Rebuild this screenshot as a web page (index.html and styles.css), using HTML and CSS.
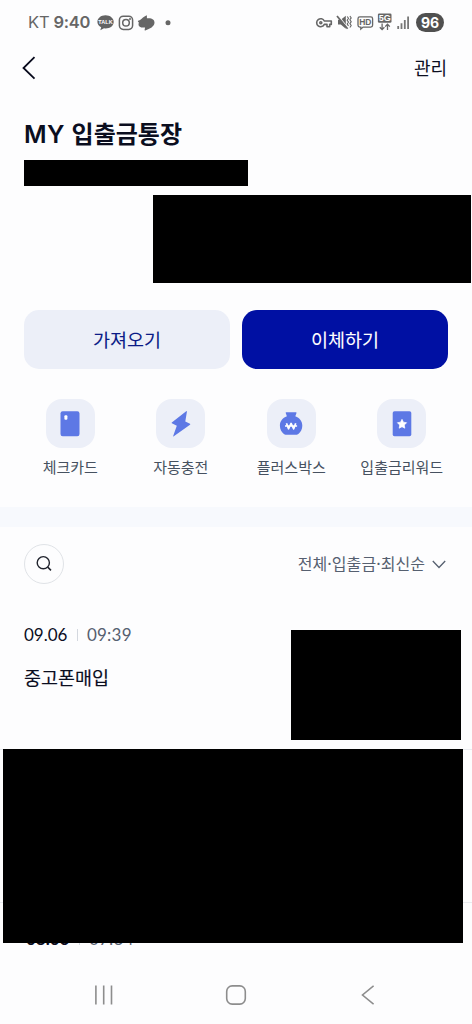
FILE: index.html
```html
<!DOCTYPE html>
<html lang="ko">
<head>
<meta charset="utf-8">
<meta name="viewport" content="width=device-width, initial-scale=1">
<title>MY 입출금통장</title>
<link rel="stylesheet" href="styles.css">
</head>
<body>
<div class="phone">
  <header class="status">
    <span class="carrier">KT</span>
    <span class="clock">9:40</span>
    <svg class="status-left" width="78" height="18" viewBox="0 0 78 18">
      <path d="M8.500 1.300c4.600 0 8.200 2.900 8.200 6.600s-3.600 6.500-8.200 6.500l-1.500-.1-3.700 2 .9-3C1.800 12.100.4 10.100.4 7.900c0-3.700 3.500-6.600 8.100-6.600z" fill="#636363"/>
      <text class="talk" x="8.500" y="9.900" text-anchor="middle">TALK</text>
      <g fill="none" stroke="#666" stroke-width="1.500"><rect x="22.400" y="2.200" width="13.200" height="13.200" rx="3.800"/><circle cx="29" cy="8.800" r="3.300"/></g>
      <circle cx="33" cy="5" r="1" fill="#666"/>
      <path d="M49.300 1.400q.6-.5.600.3v2.600c4.800-.6 7.600 1.200 7.600 4.300 0 4-4.600 6.400-9.200 7.800q-.9.200-.7-.7l.5-2.200c-4.200.5-6.600-.8-6.600-3 0-.9.500-1.600.2-2.200-.3-.7-1.100-.8-.8-1.400.3-.5 1.300-.3 2.500-1.200 1.700-1.300 3.300-3.100 5.900-4.300z" fill="#666"/>
      <circle cx="71" cy="8.700" r="2.500" fill="#666"/>
    </svg>
    <svg class="status-right" width="96" height="20" viewBox="0 0 96 20">
      <g fill="none" stroke="#666" stroke-width="1.600" stroke-linejoin="round">
        <path d="M9.300 9h7v3.400h-1.600v2.300h-2.700v-2.300H9.300a4 4 0 1 1 0-3.400z"/>
        <circle cx="5.800" cy="10.700" r="1"/>
      </g>
      <path d="M23 7.700h2.800l5-4v13l-5-4.200H23z" fill="#666"/>
      <path d="M23 3.400l10 12.800" stroke="#fdfdfe" stroke-width="1.300"/>
      <path d="M22 4l10.600 12.800" stroke="#666" stroke-width="1.700"/>
      <path d="M32.200 4.500l1.300 1.800-1.300 1.900 1.300 1.900-1.300 1.900 1.300 1.900M34.900 4l1.300 1.900-1.300 1.900 1.300 1.900-1.300 1.900 1.300 1.900-1.300 2" fill="none" stroke="#666" stroke-width="1.100"/>
      <path d="M44.800 4.900h11q1.800 0 1.800 1.800v6.600q0 1.800-1.800 1.800h-7.700l-2.300 2v-2h-1q-1.800 0-1.800-1.800V6.700q0-1.800 1.800-1.800z" fill="none" stroke="#666" stroke-width="1.300"/>
      <text class="hd" x="50.300" y="13.200" text-anchor="middle">HD</text>
      <rect x="62.900" y="1.500" width="13.600" height="9.300" rx="1.300" fill="#666"/>
      <text class="five-g" x="69.700" y="9.400" text-anchor="middle">5G</text>
      <path d="M67.100 11.500v6M64.800 15.200l2.300 2.400 2.300-2.400M72.500 18v-5.700M70.200 14.600l2.300-2.400 2.300 2.400" fill="none" stroke="#666" stroke-width="1.300"/>
      <path d="M83.200 14v3M86.500 11.200v5.800M89.800 8v9M93.100 4.600V17" stroke="#777" stroke-width="1.800"/>
    </svg>
    <span class="battery">96</span>
  </header>

  <nav class="topbar">
    <svg width="14" height="24" viewBox="0 0 14 24"><path d="M12.500 1.200L1.500 12l11 10.700" fill="none" stroke="#080a1c" stroke-width="1.800"/></svg>
    <a class="manage">관리</a>
  </nav>

  <section class="account">
    <h1 class="account-name"><span class="my">MY</span> 입출금통장</h1>
    <div class="mask mask-number"></div>
    <div class="mask mask-balance"></div>
  </section>

  <div class="actions">
    <button class="btn btn-light">가져오기</button>
    <button class="btn btn-primary">이체하기</button>
  </div>

  <div class="shortcuts">
    <div class="shortcut">
      <span class="tile"><svg width="26" height="28" viewBox="0 0 26 28"><rect x="3.500" y="1.200" width="19" height="25" rx="2.200" fill="#5d78e5"/><rect x="7.400" y="5.300" width="3" height="4.400" rx="1" fill="#fff"/></svg></span>
      <span class="label">체크카드</span>
    </div>
    <div class="shortcut">
      <span class="tile"><svg width="26" height="28" viewBox="0 0 26 28"><path d="M18.200 1.200L3.800 12.400q-.5.500.1.900l4.900 2.400-3.600 10.200q-.2.900.6.400L22 14.800q.6-.6 0-1l-4.700-2.200 1.600-9.900q0-.9-.7-.5z" fill="#5d78e5"/></svg></span>
      <span class="label">자동충전</span>
    </div>
    <div class="shortcut">
      <span class="tile"><svg width="26" height="28" viewBox="0 0 26 28"><path d="M8.300 2.300h9.600q.9 0 .6.800l-1.200 3.200c4.400 1.500 7 5 7 9.500 0 3.400-1.700 6.300-3.700 8-.9.900-1.500 1-2.700 1H8.300c-1.200 0-1.800-.1-2.700-1-2-1.700-3.700-4.600-3.700-8 0-4.500 2.600-8 7-9.500L7.700 3.100q-.3-.8.600-.8z" fill="#5d78e5"/><path d="M8.500 13.200l2 5.600 2.600-5.400 2.600 5.400 2-5.600M7 16h12.100" fill="none" stroke="#fff" stroke-width="1.700" stroke-linejoin="round"/></svg></span>
      <span class="label">플러스박스</span>
    </div>
    <div class="shortcut">
      <span class="tile"><svg width="26" height="28" viewBox="0 0 26 28"><rect x="3.700" y="1.200" width="18.600" height="25" rx="1.800" fill="#5d78e5"/><path d="M13 9.300l1.400 2.900 3.200.5-2.300 2.300.5 3.200-2.800-1.500-2.800 1.500.5-3.200-2.300-2.300 3.200-.5z" fill="#fff" stroke="#fff" stroke-width=".7" stroke-linejoin="round"/></svg></span>
      <span class="label">입출금리워드</span>
    </div>
  </div>

  <div class="divider"></div>

  <section class="history">
    <div class="filter-row">
      <span class="search"><svg width="18" height="18" viewBox="0 0 18 18"><circle cx="8.300" cy="7.700" r="6.100" fill="none" stroke="#20232d" stroke-width="1.400"/><path d="M12.700 12.100l3.300 3.300" stroke="#20232d" stroke-width="1.500"/></svg></span>
      <span class="filter"><span class="filter-text">전체·입출금·최신순</span><svg width="14" height="9" viewBox="0 0 14 9"><path d="M.8 1l6.200 6.500L13.200 1" fill="none" stroke="#566070" stroke-width="1.300"/></svg></span>
    </div>
    <article class="entry">
      <div class="when"><span class="date">09.06</span><i class="bar"></i><span class="time">09:39</span></div>
      <div class="payee">중고폰매입</div>
      <div class="mask mask-amount"></div>
    </article>
    <article class="entry entry-hidden">
      <div class="mask mask-entry"></div>
    </article>
    <article class="entry entry-last">
      <div class="when"><span class="date">08.06</span><i class="bar"></i><span class="time">07:34</span></div>
    </article>
  </section>

  <footer class="navbar">
    <svg width="20" height="20" viewBox="0 0 20 20"><path d="M1.900.6v18.800M9.700.6v18.800M17.500.6v18.800" stroke="#8d8d8d" stroke-width="1.600"/></svg>
    <svg class="home" width="22" height="20" viewBox="0 0 22 20"><rect x="1.700" y=".9" width="18.600" height="18.200" rx="5.500" fill="none" stroke="#8d8d8d" stroke-width="1.600"/></svg>
    <svg width="14" height="20" viewBox="0 0 14 20"><path d="M13.600.8L2.500 10l11.100 9.200" fill="none" stroke="#8d8d8d" stroke-width="1.600"/></svg>
  </footer>
</div>
</body>
</html>
```

FILE: styles.css
```css
* { box-sizing: border-box; }

body {
  margin: 0;
  background: #fdfdfe;
  color: #0b0e1f;
  font-family: "Noto Sans CJK KR", sans-serif;
}

svg { display: block; flex: none; }

.phone {
  width: 472px;
  height: 1024px;
  overflow: hidden;
  display: flex;
  flex-direction: column;
}

.phone > * { flex: none; }

/* Status bar */
.status {
  height: 44px;
  padding: 0 28px;
  display: flex;
  align-items: center;
  color: #666;
  font: 16.500px/20px Inter, sans-serif;
}

.carrier { width: 25.500px; }
.clock { width: 43.500px; font-weight: 600; letter-spacing: -.3px; }
.status-left { margin-top: 1px; }
.status-right { margin-left: auto; margin-right: 5px; }
.talk { font: bold 5.500px "Liberation Sans", sans-serif; fill: #fff; }
.hd { font: bold 8.500px "Liberation Sans", sans-serif; fill: #666; }
.five-g { font: bold 9px "Liberation Sans", sans-serif; fill: #fff; }

.battery {
  width: 28px;
  height: 19px;
  border-radius: 10px;
  background: #505050;
  color: #fff;
  font-size: 14px;
  font-weight: 700;
  line-height: 19px;
  text-align: center;
}

/* Header */
.topbar {
  height: 48px;
  padding: 0 25px 0 22px;
  display: flex;
  align-items: center;
  justify-content: space-between;
}

.manage { padding-bottom: 2px; font-size: 18px; line-height: 26px; }

.account {
  height: 218px;
  padding: 23px 1px 0 24px;
  display: flex;
  flex-direction: column;
}

.account-name {
  margin: 0;
  height: 45px;
  flex: none;
  font-size: 24px;
  font-weight: 700;
  line-height: 36px;
  white-space: nowrap;
}

.my { font: 600 24.500px/36px Inter, sans-serif; letter-spacing: .4px; }

.mask { background: #000; }
.mask-number { width: 224px; height: 26px; }
.mask-balance { width: 318px; height: 88px; margin-top: 9px; align-self: flex-end; }

.actions {
  padding: 0 24px;
  display: grid;
  grid-template-columns: 1fr 1fr;
  gap: 12px;
}

.btn {
  height: 59px;
  padding: 0 0 1px;
  border: 0;
  border-radius: 15px;
  font: 400 18.500px/58px "Noto Sans CJK KR", sans-serif;
  -webkit-text-stroke: .08px;
}

.btn-light { background: #eceff8; color: #0b1b87; }
.btn-primary { background: #0010a3; color: #fff; }

.shortcuts {
  height: 138px;
  padding: 30px 15px 0;
  display: grid;
  grid-template-columns: repeat(4, 1fr);
}

.shortcut {
  display: flex;
  flex-direction: column;
  align-items: center;
  gap: 8px;
}

.tile {
  width: 49px;
  height: 49px;
  border-radius: 16px;
  background: #eceff8;
  display: grid;
  place-items: center;
}

.label { font-size: 15px; line-height: 22px; color: #465160; white-space: nowrap; }

.divider { height: 20px; background: #f7f9fd; }

/* Transactions */
.history { height: 439px; overflow: hidden; }

.filter-row {
  height: 75px;
  padding: 17px 26px 0 24px;
  display: flex;
  align-items: flex-start;
  justify-content: space-between;
}

.search {
  width: 40px;
  height: 40px;
  border: 1px solid #e0e3e7;
  border-radius: 50%;
  display: grid;
  place-items: center;
}

.filter { height: 40px; display: flex; align-items: center; gap: 7px; color: #566070; }
.filter-text { padding-bottom: 2px; font-size: 16px; line-height: 24px; letter-spacing: .05px; }

.entry {
  position: relative;
  height: 148px;
  padding: 23px 24px 0;
  border-bottom: 1px solid #e9ebef;
}

.when {
  display: flex;
  align-items: center;
  font: 17px/20px Lato, sans-serif;
}

.date { width: 42px; }
.bar { width: 1px; height: 12px; margin: 0 9px 0 11px; background: #d4d8df; }
.time { color: #566070; letter-spacing: .2px; }

.payee {
  margin-top: 19px;
  font-size: 18.500px;
  line-height: 26px;
  -webkit-text-stroke: .15px;
}

.mask-amount {
  position: absolute;
  right: 11px;
  top: 28px;
  width: 170px;
  height: 110px;
}

.entry-hidden { height: 153px; }

.mask-entry {
  position: absolute;
  z-index: 1;
  left: 3px;
  top: -1px;
  width: 460px;
  height: 194px;
}

.entry-last { height: 60px; padding: 26px 24px 0 26px; border: 0; }
.entry-last .date { font-weight: 700; }

/* System navigation */
.navbar {
  height: 58px;
  padding: 0 98px 0 94px;
  display: flex;
  align-items: center;
  justify-content: space-between;
}

.home { margin-right: 3px; }
```
